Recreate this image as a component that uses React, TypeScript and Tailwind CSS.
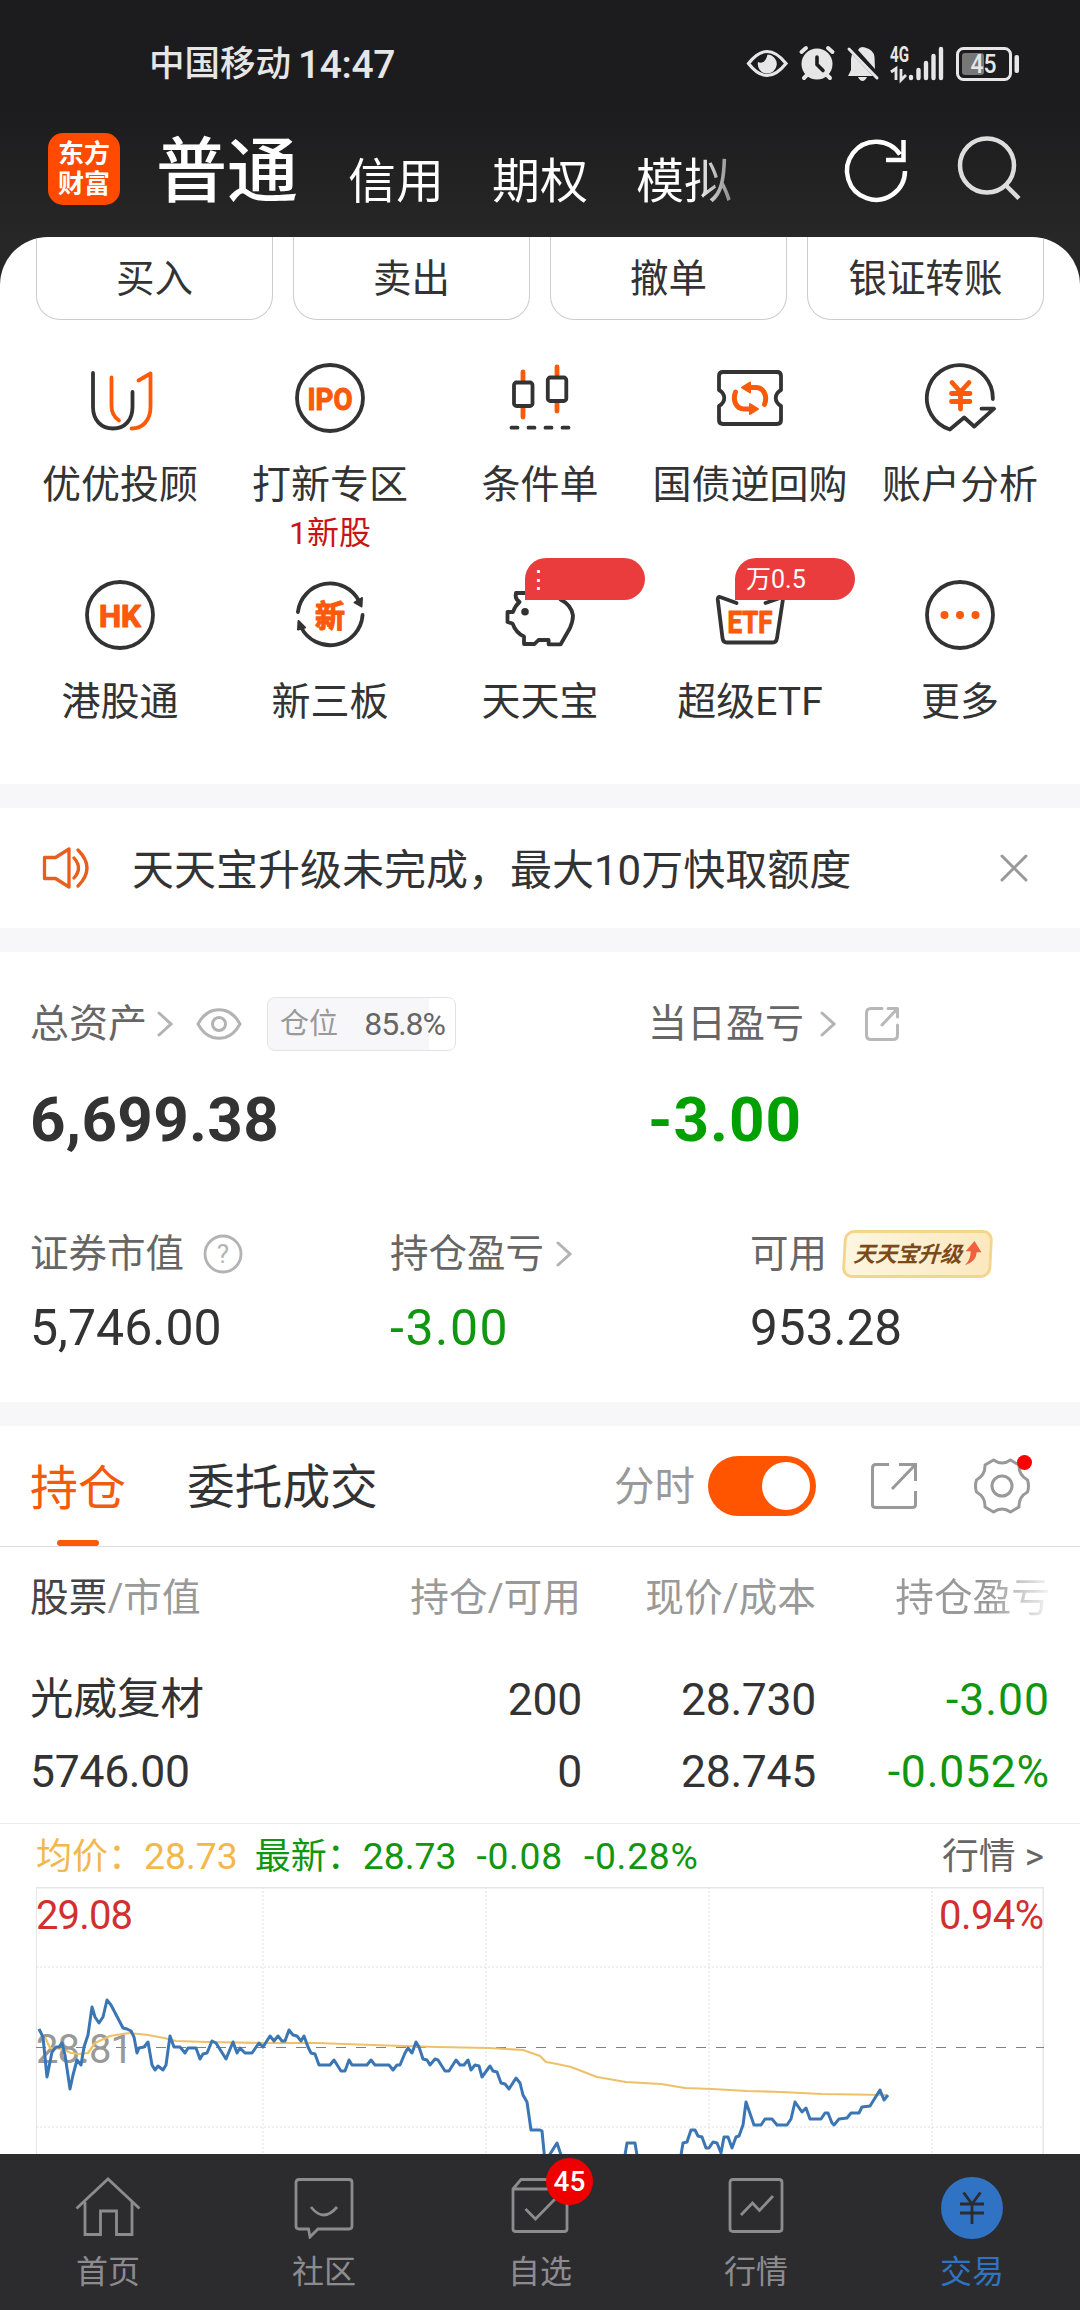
import type { ReactNode } from 'react'

const ORANGE = '#fa5a0a'
const INK = '#333333'

const HEADER_TABS = ['信用', '期权', '模拟']
const ACTIONS = ['买入', '卖出', '撤单', '银证转账']

// intraday series, in chart pixels; values below the visible area are clipped
const PRICE =
  '3,142 7,150 11,190 16,165 20,160 23,160 26,156 29,168 34,202 37,188 41,173 45,178 48,160 52,148 56,120 59,130 63,136 67,130 71,113 75,118 87,141 91,142 95,144 98,150 101,166 103,161 108,160 112,155 116,178 119,183 122,179 127,183 130,178 134,149 138,160 144,160 149,166 152,161 160,161 164,172 167,167 171,166 176,154 180,156 190,172 197,155 201,166 204,161 209,166 216,166 223,156 227,160 234,149 238,154 242,149 246,154 249,154 253,143 257,148 261,149 265,154 268,149 272,160 275,166 279,167 283,178 294,178 298,173 305,184 309,184 313,173 316,178 331,178 335,173 339,178 353,178 357,183 361,178 364,178 369,166 372,161 376,166 380,155 383,160 387,172 391,173 394,178 399,172 402,173 409,184 413,184 420,173 424,178 428,178 432,173 435,183 439,178 443,179 446,190 454,179 457,184 461,185 465,196 469,197 473,202 480,191 484,196 487,208 491,215 495,243 504,243 506,244 509,275 521,256 525,268 525,285 588,285 589,268 591,256 599,256 601,268 601,290 644,290 645,268 647,256 651,255 655,243 659,243 662,249 666,250 670,261 673,261 677,255 681,256 685,266 688,250 692,250 696,261 700,250 703,249 707,238 710,215 718,238 725,238 729,232 736,232 741,238 751,238 755,232 759,215 766,225 770,221 774,232 785,232 789,226 792,226 796,236 798,238 803,232 811,231 815,226 823,226 826,220 834,219 844,203 848,213 852,208'
const AVERAGE =
  '9,150 14,161 26,162 35,166 43,167 52,166 59,156 74,149 93,146 112,148 128,151 140,154 171,155 226,156 281,156 336,158 401,160 453,161 487,163 504,169 510,175 521,177 535,180 561,190 590,195 625,197 649,201 676,202 711,204 745,205 786,207 850,208'

function Glyph({ children }: { children: ReactNode }) {
  return (
    <svg
      viewBox="0 0 72 72"
      className="size-[72px]"
      fill="none"
      stroke={INK}
      strokeWidth="3.8"
      strokeLinecap="round"
      strokeLinejoin="round"
    >
      {children}
    </svg>
  )
}

function GlyphText({ children, size = 32, width, y = 47.5 }: { children: string; size?: number; width: number; y?: number }) {
  return (
    <text
      x={36 - width / 2}
      y={y}
      textLength={width}
      lengthAdjust="spacingAndGlyphs"
      fill={ORANGE}
      stroke={ORANGE}
      strokeWidth="1.2"
      fontSize={size}
      fontWeight="700"
    >
      {children}
    </text>
  )
}

const SHORTCUTS: { label: string; note?: string; tag?: string; icon: ReactNode }[] = [
  {
    label: '优优投顾',
    icon: (
      <>
        <path d="M9 11V45C9 58 17 66.5 29 66.5S48.5 58 48.5 45V30" />
        <path stroke={ORANGE} d="M27.5 15.5V44C27.5 51 30 55 35 58.5M54.5 18.5 66.5 11.5V45C66.5 58 59 66.5 47.5 66.5" />
      </>
    ),
  },
  {
    label: '打新专区',
    note: '1新股',
    icon: (
      <>
        <circle cx="36" cy="36" r="33" />
        <GlyphText width={45}>IPO</GlyphText>
      </>
    ),
  },
  {
    label: '条件单',
    icon: (
      <>
        <path stroke={ORANGE} strokeWidth="4.8" d="M19 10v8M19 46v9M53 5v8M53 41v8" />
        <rect x="10" y="20.5" width="18.5" height="23.5" rx="2.5" />
        <rect x="43.8" y="15.5" width="18.5" height="23.5" rx="2.5" />
        <path d="M7.5 65.7h6M24.5 65.7h6M41.5 65.7h6M58.5 65.7h6" />
      </>
    ),
  },
  {
    label: '国债逆回购',
    icon: (
      <>
        <path d="M5 14Q5 10 9 10H63Q67 10 67 14V28C60 32 60 40 67 44V58Q67 62 63 62H9Q5 62 5 58V44C12 40 12 32 5 28Z" />
        <g stroke={ORANGE} strokeWidth="5">
          <path d="M36 25.5H42C49 25.5 54 33 50.5 42.5M36 47H30C23 47 18 39.5 21.5 30" />
          <path strokeWidth="2" fill={ORANGE} d="M28 25.5 36 20.5V30.5ZM44 47 36 42V52Z" />
        </g>
      </>
    ),
  },
  {
    label: '账户分析',
    icon: (
      <>
        <path d="M68.8 37A33 33 0 1 0 25.8 67.5L40.2 55.5 50.2 64.5 70 46.7H57.5" />
        <path stroke={ORANGE} strokeWidth="4.8" d="M28 20.5 36.5 30 45 20.5M27.5 31.5H46M27.5 39.5H46M36.5 31V47" />
      </>
    ),
  },
  {
    label: '港股通',
    icon: (
      <>
        <circle cx="36" cy="36" r="33" />
        <GlyphText width={42}>HK</GlyphText>
      </>
    ),
  },
  {
    label: '新三板',
    icon: (
      <>
        <path d="M3.9 33A32.5 32.5 0 0 1 65 22M68.6 36A32.500 32.500 0 0 1 7 48" />
        <path strokeWidth="2" fill={INK} d="M60.5 23.5 67.5 27.5 68 19ZM11 48.5 4 50.5 4.5 42Z" />
        <GlyphText width={30} size={31}>新</GlyphText>
      </>
    ),
  },
  {
    label: '天天宝',
    tag: '⋮',
    icon: (
      <>
        <path d="M24 14H12Q10.5 20 15.5 23 11 27 9 33H3.5V43L8.5 44.5Q12 54 20 57.5V65H30.5L34.5 61H44.6V65.3H56.7L66 49Q69 42 69 36.5 67.5 26 56.5 20.5" />
        <circle cx="21" cy="32.7" r="3.8" fill={INK} stroke="none" />
      </>
    ),
  },
  {
    label: '超级ETF',
    tag: '万0.5',
    icon: (
      <>
        <path d="M22.5 24 6 18Q3.5 17.5 3.8 21L8.5 59Q9 63.5 13 63.5H58.5Q62.5 63.5 63 59L69 20Q68.5 18 66 19L51.5 24" />
        <GlyphText width={45} y={53.5}>ETF</GlyphText>
      </>
    ),
  },
  {
    label: '更多',
    icon: (
      <>
        <circle cx="36" cy="36" r="33" />
        <g fill={ORANGE} stroke="none">
          <circle cx="20.5" cy="36" r="4" />
          <circle cx="36" cy="36" r="4" />
          <circle cx="51.5" cy="36" r="4" />
        </g>
      </>
    ),
  },
]

const NAV: { label: string; badge?: string; active?: boolean; icon: ReactNode }[] = [
  { label: '首页', icon: <path d="M1.5 31.5 33 2 64.5 31.5M10 25V57.5H25.5V34H41.5V57.5H57V25" /> },
  {
    label: '社区',
    icon: <path d="M8 2.5H58Q61 2.5 61 5.5V49Q61 52 58 52H27L19 60 17.5 52H8Q5 52 5 49V5.5Q5 2.5 8 2.5ZM20 30Q32.5 46 46 30" />,
  },
  {
    label: '自选',
    badge: '45',
    icon: <path d="M6 12 14 2.5H52L60 12V52Q60 54.5 57 54.5H9Q6 54.5 6 52ZM6 12H60M18.5 32 28.5 42 49 21" />,
  },
  {
    label: '行情',
    icon: <path d="M10 2.5H56Q59 2.5 59 5.5V51.5Q59 54.5 56 54.5H10Q7 54.5 7 51.5V5.5Q7 2.5 10 2.5ZM18 38 29.5 26 36.5 33.5 50 19" />,
  },
  {
    label: '交易',
    active: true,
    icon: (
      <>
        <circle cx="33" cy="31" r="31" fill="#3073c4" stroke="none" />
        <path stroke="#2c2c2e" d="M24.5 15.5 33 27 41.5 15.5M21 27H45M21 36H45M33 27V47" />
      </>
    ),
  },
]

function Chevron() {
  return (
    <svg viewBox="0 0 16 26" className="h-[26px] w-4" fill="none" stroke="#b3b3b3" strokeWidth="3" strokeLinecap="round">
      <path d="M2 2 14 13 2 24" />
    </svg>
  )
}

function StatusBar() {
  return (
    <div className="flex h-[124px] items-center justify-between pt-1 pr-[60px] pl-[149px] text-[#e6e6e6]">
      <div className="flex items-center gap-[7px] pt-0.5">
        <span className="text-[35.5px] font-medium">中国移动</span>
        <span className="text-[39px]/[56px] font-medium tracking-[-0.4px]">14:47</span>
      </div>
      <svg viewBox="0 0 274 36" className="h-9 w-[274px] overflow-visible" fill="#e6e6e6">
        <path d="M2.5 17.5Q21-6.500 40 17.5 21 41.5 2.5 17.5Z" fill="none" stroke="#e6e6e6" strokeWidth="3.2" />
        <path d="M21.5 8.5A9.5 9.5 0 1 1 12 16Q19 19 21.5 8.5Z" />
        <circle cx="71" cy="18" r="15.5" />
        <path d="M55.5 6 60 2M86.5 6 82 2M61 29 58 32M81 29 84 32" stroke="#e6e6e6" strokeWidth="4" strokeLinecap="round" />
        <path d="M71 11V18.5L77 24.5" fill="none" stroke="#1c1c1e" strokeWidth="3.6" strokeLinecap="round" />
        <path d="M106 8 127 30H102L105 24V13ZM112 4Q114 0 119 1.5 128 4 128.5 11L129 23ZM112 31H121Q119 35 116.5 35 114 35 112 31Z" />
        <path d="M103 3 131 32" stroke="#e6e6e6" strokeWidth="3" strokeLinecap="round" />
        <text x="144" y="16" fontSize="22" fontWeight="700" textLength="19" lengthAdjust="spacingAndGlyphs">4G</text>
        <path d="M145 26 150 22.5V34M155 23V34L160 29" fill="none" stroke="#e6e6e6" strokeWidth="2.8" />
        <path
          d="M165 31V32M172.5 24V32M180 17V32M187.5 10V32M195 3V32"
          stroke="#e6e6e6"
          strokeWidth="4.4"
          strokeLinecap="round"
        />
        <rect x="211.5" y="2.5" width="53" height="31" rx="6" fill="none" stroke="#e6e6e6" strokeWidth="3" />
        <rect x="216" y="7" width="22" height="22" rx="3" fill="#777777" />
        <text x="224.5" y="27" fontSize="26" fontWeight="500" textLength="26" lengthAdjust="spacingAndGlyphs">45</text>
        <rect x="268.5" y="9" width="4.5" height="18" rx="2" />
      </svg>
    </div>
  )
}

function Header() {
  return (
    <header className="h-[237px] bg-gradient-to-b from-[#1c1c1e] from-45% to-[#272727]">
      <StatusBar />
      <div className="flex h-[92px] items-center pr-[57px] pl-12 text-white">
        <div className="mb-[2px] flex size-[72px] flex-col items-center justify-center gap-[5px] rounded-[15px] bg-[#ff4a00] text-[26px] font-bold leading-[25px]">
          <span>东方</span>
          <span>财富</span>
        </div>
        <h1 className="ml-9 pt-1 text-[71px] font-medium leading-[92px]">普通</h1>
        <nav className="ml-[50px] flex w-[392px] gap-12 bg-gradient-to-r from-white from-88% to-[#777777] to-100% bg-clip-text pt-6 text-[48px] leading-[60px] text-transparent">
          {HEADER_TABS.map((tab) => (
            <span key={tab}>{tab}</span>
          ))}
        </nav>
        <svg viewBox="0 0 64 64" className="mb-[2px] ml-auto size-16 overflow-visible" fill="none" stroke="#ffffff" strokeWidth="4.5">
          <path d="M61 34A29 29 0 1 1 56 17.5M42 23H59.5V3" />
        </svg>
        <svg viewBox="0 0 66 66" className="ml-[49px] size-[66px] overflow-visible" fill="none" stroke="#dddddd" strokeWidth="4.5">
          <circle cx="30" cy="28.5" r="27" />
          <path d="M48.5 48 62 61.5" />
        </svg>
      </div>
    </header>
  )
}

function Shortcuts() {
  return (
    <section className="h-[547px] overflow-hidden rounded-t-[48px] bg-white">
      <div className="grid grid-cols-4 gap-5 px-9">
        {ACTIONS.map((action) => (
          <button
            key={action}
            type="button"
            className="h-[83px] rounded-b-[24px] border border-t-0 border-[#cccccc] pt-px text-[38.5px] leading-[80px]"
          >
            {action}
          </button>
        ))}
      </div>
      <div className="grid grid-cols-5 px-[15px] pt-[42px]">
        {SHORTCUTS.map(({ label, note, tag, icon }) => (
          <div key={label} className="relative flex h-[217px] flex-col items-center whitespace-nowrap">
            <Glyph>{icon}</Glyph>
            <span className="mt-[26px] text-[39px] leading-[50px]">{label}</span>
            {note && <span className="mt-0.5 text-[32px] leading-[42px] text-[#c81414]">{note}</span>}
            {tag && (
              <span className="absolute -top-[21px] left-[90px] h-[42px] w-[120px] rounded-[21px] rounded-bl-none bg-[#ea3c3c] pl-[11px] text-[25px] leading-[43px] text-white">
                {tag === '⋮' ? <span className="-ml-[10px]">{tag}</span> : tag}
              </span>
            )}
          </div>
        ))}
      </div>
    </section>
  )
}

function Notice() {
  return (
    <section className="flex h-[120px] items-center bg-white pr-[52px] pl-[42px]">
      <svg viewBox="0 0 48 42" className="h-[42px] w-12" fill="none" stroke="#e65f1e" strokeWidth="3.3" strokeLinejoin="round" strokeLinecap="round">
        <path d="M2.5 10.5H13.5L27 2V40L13.5 31.5H2.5ZM32 11Q41 21 32 31M36 3Q54 21 36 39" />
      </svg>
      <p className="ml-[42px] pt-[5px] text-[42px] leading-[60px]">天天宝升级未完成，最大10万快取额度</p>
      <svg viewBox="0 0 28 28" className="ml-auto size-7" stroke="#999999" strokeWidth="3" strokeLinecap="round">
        <path d="M2 2 26 26M26 2 2 26" />
      </svg>
    </section>
  )
}

function Assets() {
  return (
    <section className="h-[450px] bg-white pt-11 pl-[30px] text-[39px] text-[#666666]">
      <div className="flex">
        <div className="w-[618px]">
          <div className="flex h-[56px] items-center">
            <span>总资产</span>
            <span className="ml-2.5"><Chevron /></span>
            <svg viewBox="0 0 46 32" className="ml-[23px] h-8 w-[46px]" fill="none" stroke="#b3b3b3" strokeWidth="3">
              <path d="M2 16Q8 5 17 2.5 23 1 29 2.5 38 5 44 16 38 27 29 29.5 23 31 17 29.5 8 27 2 16Z" />
              <circle cx="23" cy="16" r="6.5" />
            </svg>
            <div className="ml-[25px] flex h-[54px] w-[189px] items-center justify-between rounded-lg border border-[#e3e3e3] bg-gradient-to-r from-[#f7f7fa] from-86% to-white to-86% pr-[10px] pl-3">
              <span className="pt-0.5 text-[29px] text-[#999999]">仓位</span>
              <span className="text-[32px] tracking-[-1px]">85.8%</span>
            </div>
          </div>
          <p className="mt-[36px] text-[62px] font-bold leading-[64px] tracking-[0.3px] text-[#333333]">6,699.38</p>
        </div>
        <div>
          <div className="flex h-[56px] items-center">
            <span>当日盈亏</span>
            <span className="ml-4"><Chevron /></span>
            <svg viewBox="0 0 36 36" className="ml-7 size-9" fill="none" stroke="#b8b8b8" strokeWidth="3" strokeLinecap="round" strokeLinejoin="round">
              <path d="M18 2.5H7Q2.5 2.5 2.5 7V29Q2.5 33.5 7 33.5H29Q33.5 33.5 33.5 29V19M24 2.5H33.5V11M33 3 18 19" />
            </svg>
          </div>
          <p className="mt-[36px] text-[62px] font-bold leading-[64px] tracking-[1px] text-[#00a000]">-3.00</p>
        </div>
      </div>
      <div className="mt-[75px] flex text-[38.5px]">
        <div className="w-[360px]">
          <div className="flex h-[54px] items-center">
            <span>证券市值</span>
            <svg viewBox="0 0 40 40" className="ml-[19px] size-10" fill="none" stroke="#b3b3b3" strokeWidth="2.8">
              <circle cx="20" cy="20" r="18" />
              <text x="20" y="29" textAnchor="middle" fontSize="26" fill="#b3b3b3" stroke="none">?</text>
            </svg>
          </div>
          <p className="mt-[18px] text-[50px] leading-[58px] text-[#333333]">5,746.00</p>
        </div>
        <div className="w-[360px]">
          <div className="flex h-[54px] items-center">
            <span>持仓盈亏</span>
            <span className="ml-3"><Chevron /></span>
          </div>
          <p className="mt-[18px] text-[50px] leading-[58px] tracking-[1.6px] text-[#109610]">-3.00</p>
        </div>
        <div>
          <div className="flex h-[54px] items-center">
            <span>可用</span>
            <div className="ml-4 flex h-12 w-[149px] -skew-x-3 items-center justify-center rounded-[10px] border-3 border-[#f3d68c] bg-gradient-to-r from-[#fdf6e0] to-[#fbe8bf]">
              <span className="text-[22px] font-bold italic tracking-[-0.4px] text-[#7a4a1c]">天天宝升级</span>
              <svg viewBox="0 0 20 28" className="h-[26px] w-5" fill="#f0603c">
                <path d="M12 0 20 12H15Q15 22 3 26 9 20 8.5 11H3Z" />
              </svg>
            </div>
          </div>
          <p className="mt-[18px] text-[49.5px] leading-[58px] text-[#333333]">953.28</p>
        </div>
      </div>
    </section>
  )
}

function HoldingTabs() {
  return (
    <div className="flex h-[121px] items-center border-b border-[#dddddd] pr-[50px] pl-[30px]">
      <div className="relative flex h-full items-center pt-[6px] text-[48px] text-[#f25a0c]">
        持仓
        <span className="absolute bottom-0 left-[27px] h-1.5 w-[42px] rounded-[3px] bg-[#fa5a0a]" />
      </div>
      <span className="ml-[61px] pt-[6px] text-[47.7px]">委托成交</span>
      <span className="ml-auto pt-[3px] text-[40.5px] text-[#999999]">分时</span>
      <div className="ml-[13px] flex h-[60px] w-[108px] items-center justify-end rounded-full bg-[#ff5500] pr-1.5">
        <span className="size-12 rounded-full bg-white" />
      </div>
      <svg viewBox="0 0 46 46" className="ml-[55px] size-[46px]" fill="none" stroke="#999999" strokeWidth="3">
        <path d="M18 1.5H5Q1.5 1.5 1.5 5V42Q1.5 44.5 5 44.5H41Q44.5 44.5 44.5 42V28M28 1.5H44.5V18M44 2 21 26" />
      </svg>
      <div className="relative ml-[57px]">
        <svg viewBox="0 0 56 56" className="size-14" fill="none" stroke="#999999" strokeWidth="3" strokeLinejoin="round">
          <path d="M19.5 2Q28 8 36.5 2L45 7Q44.5 17 53.5 22Q55.5 28 53.5 34Q44.5 39 45 49L36.5 54Q28 48 19.5 54L11 49Q11.5 39 2.5 34Q.5 28 2.5 22Q11.5 17 11 7Z" />
          <circle cx="28" cy="28" r="10" />
        </svg>
        <span className="absolute -top-[3px] right-[-2px] size-[15px] rounded-full bg-[#ff0000]" />
      </div>
    </div>
  )
}

function Holdings() {
  return (
    <div className="h-[277px] border-b border-[#ebebeb] pr-[30px] pl-[30px]">
      <div className="grid h-[102px] grid-cols-[300px_251px_235px_234px] items-center text-right text-[38.7px] text-[#999999]">
        <span className="text-left"><span className="text-[#444444]">股票</span>/市值</span>
        <span>持仓/可用</span>
        <span>现价/成本</span>
        <span className="ml-[78px] bg-gradient-to-r from-[#999999] from-60% to-[#f4f4f4] to-100% bg-clip-text text-transparent">持仓盈亏</span>
      </div>
      <div className="mt-[15px] grid grid-cols-[300px_252px_234px_234px] text-right text-[44.5px] leading-[72px] tracking-[-0.3px]">
        <span className="text-left text-[43.5px] tracking-normal">光威复材</span>
        <span>200</span>
        <span>28.730</span>
        <span className="tracking-[1px] text-[#109610]">-3.00</span>
        <span className="text-left">5746.00</span>
        <span>0</span>
        <span>28.745</span>
        <span className="tracking-[0.8px] text-[#109610]">-0.052%</span>
      </div>
    </div>
  )
}

function Quote() {
  return (
    <div className="px-9">
      <div className="flex h-[63px] items-center pt-0.5 text-[37.3px] text-[#109610]">
        <span className="text-[#f2b84b]"><span className="text-[36px]">均价：</span>28.73</span>
        <span className="ml-[17px]"><span className="text-[36px]">最新：</span>28.73</span>
        <span className="ml-5 tracking-[0.7px]">-0.08</span>
        <span className="ml-[21px] tracking-[0.7px]">-0.28%</span>
        <span className="ml-auto text-[36.8px] text-[#666666]">行情 &gt;</span>
      </div>
      <svg viewBox="0 0 1008 267" className="block h-[267px] w-[1008px]" fill="none">
        <path d="M0 267V.5H1007.5V267" stroke="#e6e6e6" strokeWidth="2" />
        <path d="M227 0V267M450 0V267M673 0V267M896 0V267M0 80H1008M0 240H1008" stroke="#dedede" strokeDasharray="2 2" />
        <path d="M0 160.5H1008" stroke="#808080" strokeDasharray="10 10" />
        <g fontSize="40">
          <text x="0" y="42" fill="#d32f2f" textLength="97">29.08</text>
          <text x="1008" y="42" fill="#d32f2f" textAnchor="end" textLength="105">0.94%</text>
          <text x="0" y="176" fill="#999999" textLength="97">28.81</text>
        </g>
        <polyline points={AVERAGE} stroke="#eec168" strokeWidth="2.2" strokeLinejoin="round" />
        <polyline points={PRICE} stroke="#3a75b4" strokeWidth="3" strokeLinejoin="round" />
      </svg>
    </div>
  )
}

function BottomNav() {
  return (
    <nav className="grid h-[156px] grid-cols-5 bg-[#2c2c2e] pt-[23px] text-[32px] text-[#8c8c90]">
      {NAV.map(({ label, badge, active, icon }) => (
        <div key={label} className={active ? 'relative flex flex-col items-center text-[#3073c4]' : 'relative flex flex-col items-center'}>
          <svg viewBox="0 0 66 62" className="mr-px h-[62px] w-[66px]" fill="none" stroke="#8c8c90" strokeWidth="2.8">
            {icon}
          </svg>
          <span className="mt-3 leading-[42px]">{label}</span>
          {badge && (
            <span className="absolute -top-[19px] left-[114px] size-[47px] rounded-full bg-[#ee0000] text-center text-[28px] font-medium leading-[47px] text-white">
              {badge}
            </span>
          )}
        </div>
      ))}
    </nav>
  )
}

export default function App() {
  return (
    <div className="flex h-[2310px] w-[1080px] flex-col overflow-hidden bg-[#272727] font-[Roboto,'Noto_Sans_CJK_SC',sans-serif] text-[#333333]">
      <Header />
      <div className="flex h-[1917px] flex-col gap-6 bg-[linear-gradient(#272727_60px,#f7f7fa_60px)]">
        <Shortcuts />
        <Notice />
        <Assets />
        <section className="bg-white">
          <HoldingTabs />
          <Holdings />
          <Quote />
        </section>
      </div>
      <BottomNav />
    </div>
  )
}
